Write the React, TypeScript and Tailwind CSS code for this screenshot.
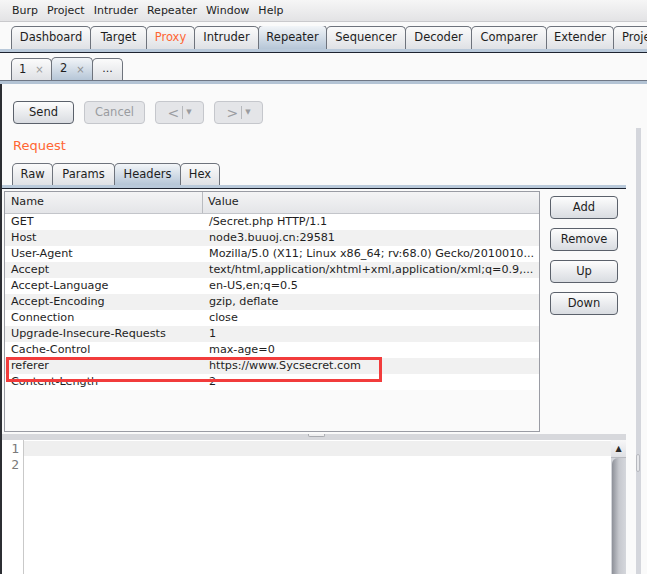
import React from 'react';

const menus = ['Burp', 'Project', 'Intruder', 'Repeater', 'Window', 'Help'];

const mainTabs = [
  { label: 'Dashboard', w: 80 },
  { label: 'Target', w: 57 },
  { label: 'Proxy', w: 49, orange: true },
  { label: 'Intruder', w: 65 },
  { label: 'Repeater', w: 69, selected: true },
  { label: 'Sequencer', w: 80 },
  { label: 'Decoder', w: 67 },
  { label: 'Comparer', w: 76 },
  { label: 'Extender', w: 68 },
  { label: 'Proje', w: 60 },
];

const headers: [string, string][] = [
  ['GET', '/Secret.php HTTP/1.1'],
  ['Host', 'node3.buuoj.cn:29581'],
  ['User-Agent', 'Mozilla/5.0 (X11; Linux x86_64; rv:68.0) Gecko/2010010...'],
  ['Accept', 'text/html,application/xhtml+xml,application/xml;q=0.9,...'],
  ['Accept-Language', 'en-US,en;q=0.5'],
  ['Accept-Encoding', 'gzip, deflate'],
  ['Connection', 'close'],
  ['Upgrade-Insecure-Requests', '1'],
  ['Cache-Control', 'max-age=0'],
  ['referer', 'https://www.Sycsecret.com'],
  ['Content-Length', '2'],
];

function Tab({ label, w, selected, orange }: { label: string; w: number; selected?: boolean; orange?: boolean }) {
  return (
    <div
      style={{ width: w }}
      className={`-mr-px shrink-0 rounded-t-[5px] border border-b-0 border-[#6e737c] flex items-center overflow-hidden whitespace-nowrap text-[11.5px] ${
        label === 'Proje' ? 'justify-start pl-[8px]' : 'justify-center'
      } ${
        selected ? 'bg-gradient-to-b from-[#f2f5f8] to-[#b6c6d7] h-[24px]' : 'bg-gradient-to-b from-[#fbfbfb] to-[#dfe1e5] h-[23px]'
      } ${orange ? 'text-[#ff6633]' : 'text-[#1e1e1e]'}`}
    >
      {label}
    </div>
  );
}

function Btn({ label, w, disabled }: { label: React.ReactNode; w: number; disabled?: boolean }) {
  return (
    <div
      style={{ width: w }}
      className={`h-[23px] rounded-[4px] border flex items-center justify-center text-[11.5px] ${
        disabled
          ? 'border-[#c5c7cc] bg-[#e4e5e8] text-[#9a9ca0]'
          : 'border-[#5b616b] bg-gradient-to-b from-[#fdfdfd] to-[#d9dce1] text-[#1e1e1e]'
      }`}
    >
      {label}
    </div>
  );
}

function Arrow({ ch }: { ch: string }) {
  return (
    <span className="flex items-center gap-[3px]">
      <span className="text-[14px] leading-none">{ch}</span>
      <span className="w-px h-[13px] bg-[#b6b8bc]" />
      <span className="text-[7px]">▼</span>
    </span>
  );
}

export default function App() {
  return (
    <div className="relative w-[647px] h-[574px] overflow-hidden bg-[#fafafa] font-['DejaVu_Sans',sans-serif] text-[#1e1e1e]">
      {/* menu bar */}
      <div className="h-[22px] flex items-center gap-[9px] pl-[12px] pt-[2px] text-[11px] bg-gradient-to-b from-[#f6f6f6] to-[#e3e3e5] border-b border-[#c9c9cc]">
        {menus.map((m) => (
          <span key={m}>{m}</span>
        ))}
      </div>

      {/* main tabs */}
      <div className="mt-[4px] flex items-end pl-[11px] h-[23px] overflow-hidden">
        {mainTabs.map((t) => (
          <Tab key={t.label} {...t} />
        ))}
      </div>
      <div className="h-[4px] bg-[#b9c9da] border-b border-[#1d2330]" />

      {/* repeater tabs */}
      <div className="mt-[5px] flex items-end pl-[11px] h-[22px]">
        <div className="-mr-px w-[41px] h-[22px] rounded-t-[5px] border border-b-0 border-[#6e737c] bg-gradient-to-b from-[#fbfbfb] to-[#dfe1e5] flex items-center pl-[7px] gap-[9px] text-[11.5px]">
          1<span className="text-[10px] text-[#9a9a9a]">×</span>
        </div>
        <div className="-mr-px w-[42px] h-[23px] rounded-t-[5px] border border-b-0 border-[#6e737c] bg-gradient-to-b from-[#f2f5f8] to-[#b6c6d7] flex items-center pl-[8px] gap-[9px] text-[11.5px]">
          2<span className="text-[10px] text-[#8f8f8f]">×</span>
        </div>
        <div className="w-[31px] h-[22px] rounded-t-[5px] border border-b-0 border-[#6e737c] bg-gradient-to-b from-[#fbfbfb] to-[#dfe1e5] flex items-end justify-center pb-[3px] text-[11px]">
          ...
        </div>
      </div>
      <div className="h-[4px] bg-[#b3c3d4] border-t border-[#6f7785]" />

      {/* body */}
      <div className="flex h-[491px]">
        <div className="w-[2px] bg-[#2c2e33]" />

        <div className="w-[624px] flex flex-col">
          <div className="mt-[17px] ml-[11px] flex gap-[10px]">
            <Btn label="Send" w={61} />
            <Btn label="Cancel" w={61} disabled />
            <Btn w={49} disabled label={<Arrow ch="<" />} />
            <Btn w={49} disabled label={<Arrow ch=">" />} />
          </div>

          <div className="mt-[14px] ml-[11px] text-[13px] leading-[16px] text-[#ff6633]">Request</div>

          {/* sub tabs */}
          <div className="mt-[9px] ml-[10px] flex items-end h-[22px]">
            {[
              { label: 'Raw', w: 41 },
              { label: 'Params', w: 63 },
              { label: 'Headers', w: 67, selected: true },
              { label: 'Hex', w: 40 },
            ].map((t) => (
              <div
                key={t.label}
                style={{ width: t.w }}
                className={`-mr-px h-[22px] rounded-t-[5px] border border-b-0 border-[#6e737c] flex items-center justify-center text-[11.5px] ${
                  t.selected ? 'bg-gradient-to-b from-[#f2f5f8] to-[#b6c6d7]' : 'bg-gradient-to-b from-[#fbfbfb] to-[#dfe1e5]'
                }`}
              >
                {t.label}
              </div>
            ))}
          </div>
          <div className="h-[4px] bg-[#b9c9da] border-b border-[#1d2330]" />

          {/* headers table + buttons */}
          <div className="mt-[2px] flex h-[241px]">
            <div className="ml-[2px] w-[536px] border border-[#9a9ca4] bg-[#fafafa] flex flex-col text-[11.2px]">
              <div className="h-[22px] shrink-0 flex border-b border-[#c3c5ca] bg-gradient-to-b from-[#f4f4f5] to-[#e4e5e8]">
                <div className="w-[198px] border-r border-[#b9bbc0] pl-[6px] flex items-center">Name</div>
                <div className="flex-1 pl-[5px] flex items-center">Value</div>
              </div>
              {headers.map(([n, v], i) => (
                <div key={n} className={`h-[16px] shrink-0 flex items-center ${i % 2 ? 'bg-[#f1f1f1]' : 'bg-white'}`}>
                  <div className="w-[198px] pl-[6px] whitespace-nowrap">{n}</div>
                  <div className="flex-1 pl-[6px] whitespace-nowrap overflow-hidden">{v}</div>
                </div>
              ))}
            </div>
            <div className="ml-[10px] mt-[5px] flex flex-col gap-[9px]">
              {['Add', 'Remove', 'Up', 'Down'].map((b) => (
                <Btn key={b} label={b} w={68} />
              ))}
            </div>
          </div>

          {/* split divider */}
          <div className="mt-[2px] h-[6px] bg-[#d7d8dc] flex justify-center">
            <div className="ml-[4px] w-[17px] h-[3px] rounded-b-[2px] bg-[#eeeeef] border border-t-0 border-[#a9abb0]" />
          </div>

          {/* editor */}
          <div className="flex-1 flex bg-white">
            <div className="w-[22px] border-r border-[#c9c9c9] flex flex-col items-end pr-[4px] pt-[1px] font-['DejaVu_Sans_Mono',monospace] text-[13px] text-[#7a7a7a]">
              <div className="h-[16px] leading-[16px]">1</div>
              <div className="h-[16px] leading-[16px]">2</div>
            </div>
            <div className="flex-1 pt-[1px]">
              <div className="h-[15px] bg-[#efefef]" />
            </div>
            <div className="w-[15px] flex flex-col bg-[#d3d5da]">
              <div className="h-[18px] bg-gradient-to-b from-[#f7f7f8] to-[#dfe0e4] flex items-center justify-center text-[8px] text-[#2a2a2a] border-b border-[#b8bac0]">
                ▲
              </div>
              <div className="flex-1 ml-[1px] rounded-tl-[6px] bg-gradient-to-r from-[#8e9199] via-[#c6c8ce] to-[#d5d7dc]" />
            </div>
          </div>
        </div>

        {/* outer scrollbar */}
        <div className="flex-1 flex">
          <div className="ml-[10px] mt-[44px] w-[5px] bg-[#d4d6dc] flex flex-col">
            <div className="mt-[326px] h-[18px] w-[4px] rounded-[2px] bg-[#e6e7ea] border border-[#b7b9bf]" />
          </div>
        </div>
      </div>

      {/* annotation box */}
      <div className="absolute left-[6px] top-[357px] w-[376px] h-[25px] border-[3px] border-[#f23c3c]" />
    </div>
  );
}
